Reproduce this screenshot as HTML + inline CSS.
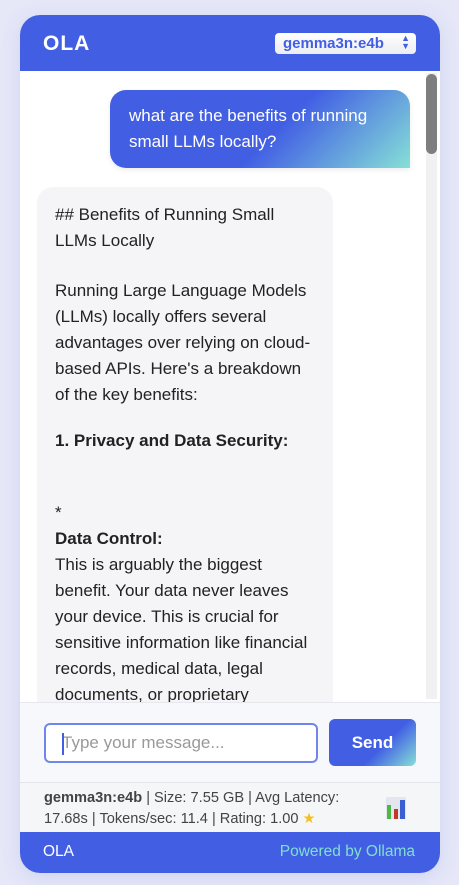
<!DOCTYPE html>
<html><head><meta charset="utf-8"><style>
*{margin:0;padding:0;box-sizing:border-box}
body{width:459px;height:885px;background:#e6e8f8;font-family:"Liberation Sans",Arial,sans-serif;position:relative;overflow:hidden}
.card{position:absolute;left:20px;top:15px;width:420px;height:858px;border-radius:20px;overflow:hidden;background:#fff;box-shadow:0 4px 20px rgba(80,90,200,.15)}
.hdr{position:absolute;left:0;top:0;width:420px;height:56px;background:#425fe4}
.logo{position:absolute;left:23px;top:17px;color:#fff;font-weight:bold;font-size:21px;letter-spacing:1px}
.sel{position:absolute;left:255px;top:18px;width:141px;height:21px;background:linear-gradient(#fff,#ecedf2);border-radius:4px;color:#425fe4;font-size:15px;font-weight:bold;padding:2px 0 0 8px}
.sel span{position:absolute;right:6px;top:1px;font-size:9px;line-height:8px;color:#425fe4}
.chat{position:absolute;left:0;top:56px;width:420px;height:631px;background:#fff}
.sb{position:absolute;left:406px;top:2px;width:11px;height:626px;background:#f1f1f1}
.th{position:absolute;left:406px;top:3px;width:11px;height:80px;background:#7e7e7e;border-radius:6px}
.ub{position:absolute;left:90px;top:19px;width:300px;height:78px;border-radius:16px 16px 0 16px;background:linear-gradient(135deg,#425fe4 0%,#425fe4 55%,#86e0d6 100%);color:#fff;font-size:17px;line-height:26px;padding:13px 0 0 19px;box-shadow:0 2px 6px rgba(0,0,0,.08)}
.ab{position:absolute;left:17px;top:116px;width:296px;height:560px;border-radius:16px;background:#f5f5f8;font-size:17px;line-height:26px;color:#222}
.ab div{position:absolute;left:18px;white-space:nowrap}
.inp{position:absolute;left:0;top:687px;width:420px;height:80px;background:#f7f8fc;border-top:1px solid #e6e8ee}
.box{position:absolute;left:24px;top:20px;width:274px;height:40px;border:2px solid #6f86ec;border-radius:6px;background:#fff;color:#999;font-size:17px;padding:8px 0 0 16px}
.box i{position:absolute;left:16px;top:8px;width:2px;height:22px;background:#425fe4}
.send{position:absolute;left:309px;top:16px;width:87px;height:47px;border-radius:6px;background:linear-gradient(135deg,#425fe4 0%,#425fe4 60%,#86e0d6 100%);color:#fff;font-weight:bold;font-size:17px;text-align:center;line-height:47px}
.st{position:absolute;left:0;top:767px;width:420px;height:50px;background:#f5f6f8;border-top:1px solid #e4e5ea;font-size:14.6px;line-height:21px;color:#444;padding:5px 0 0 24px;white-space:nowrap}
.ft{position:absolute;left:0;top:817px;width:420px;height:41px;background:#425fe4;font-size:15.5px}
</style></head><body>
<div class="card">
<div class="hdr"><div class="logo">OLA</div><div class="sel">gemma3n:e4b<span>▲<br>▼</span></div></div>
<div class="chat">
<div class="sb"></div><div class="th"></div>
<div class="ub">what are the benefits of running<br>small LLMs locally?</div>
<div class="ab">
<div style="top:15px">## Benefits of Running Small</div>
<div style="top:41px">LLMs Locally</div>
<div style="top:91px">Running Large Language Models</div>
<div style="top:117px">(LLMs) locally offers several</div>
<div style="top:143px">advantages over relying on cloud-</div>
<div style="top:169px">based APIs. Here's a breakdown</div>
<div style="top:195px">of the key benefits:</div>
<div style="top:241px;font-weight:bold">1. Privacy and Data Security:</div>
<div style="top:313px">*</div>
<div style="top:339px;font-weight:bold">Data Control:</div>
<div style="top:365px">This is arguably the biggest</div>
<div style="top:391px">benefit. Your data never leaves</div>
<div style="top:417px">your device. This is crucial for</div>
<div style="top:443px">sensitive information like financial</div>
<div style="top:469px">records, medical data, legal</div>
<div style="top:495px">documents, or proprietary</div>
</div>
</div>
<div class="inp"><div class="box"><i></i>Type your message...</div><div class="send">Send</div></div>
<div class="st"><b>gemma3n:e4b</b> | Size: 7.55 GB | Avg Latency:<br>17.68s | Tokens/sec: 11.4 | Rating: 1.00 <span style="color:#f3c022">★</span>
<svg style="position:absolute;left:366px;top:14px" width="20" height="22"><rect width="20" height="22" fill="#e3e6ee"/><rect x="1" y="8" width="4" height="14" fill="#4bb944"/><rect x="8" y="12" width="4" height="10" fill="#c3372a"/><rect x="14" y="3" width="5" height="19" fill="#3a5ed0"/></svg></div>
<div class="ft"><span style="position:absolute;left:23px;top:11px;color:#fff">OLA</span><span style="position:absolute;right:25px;top:11px;color:#7fe0d0">Powered by Ollama</span></div>
</div>
</body></html>
